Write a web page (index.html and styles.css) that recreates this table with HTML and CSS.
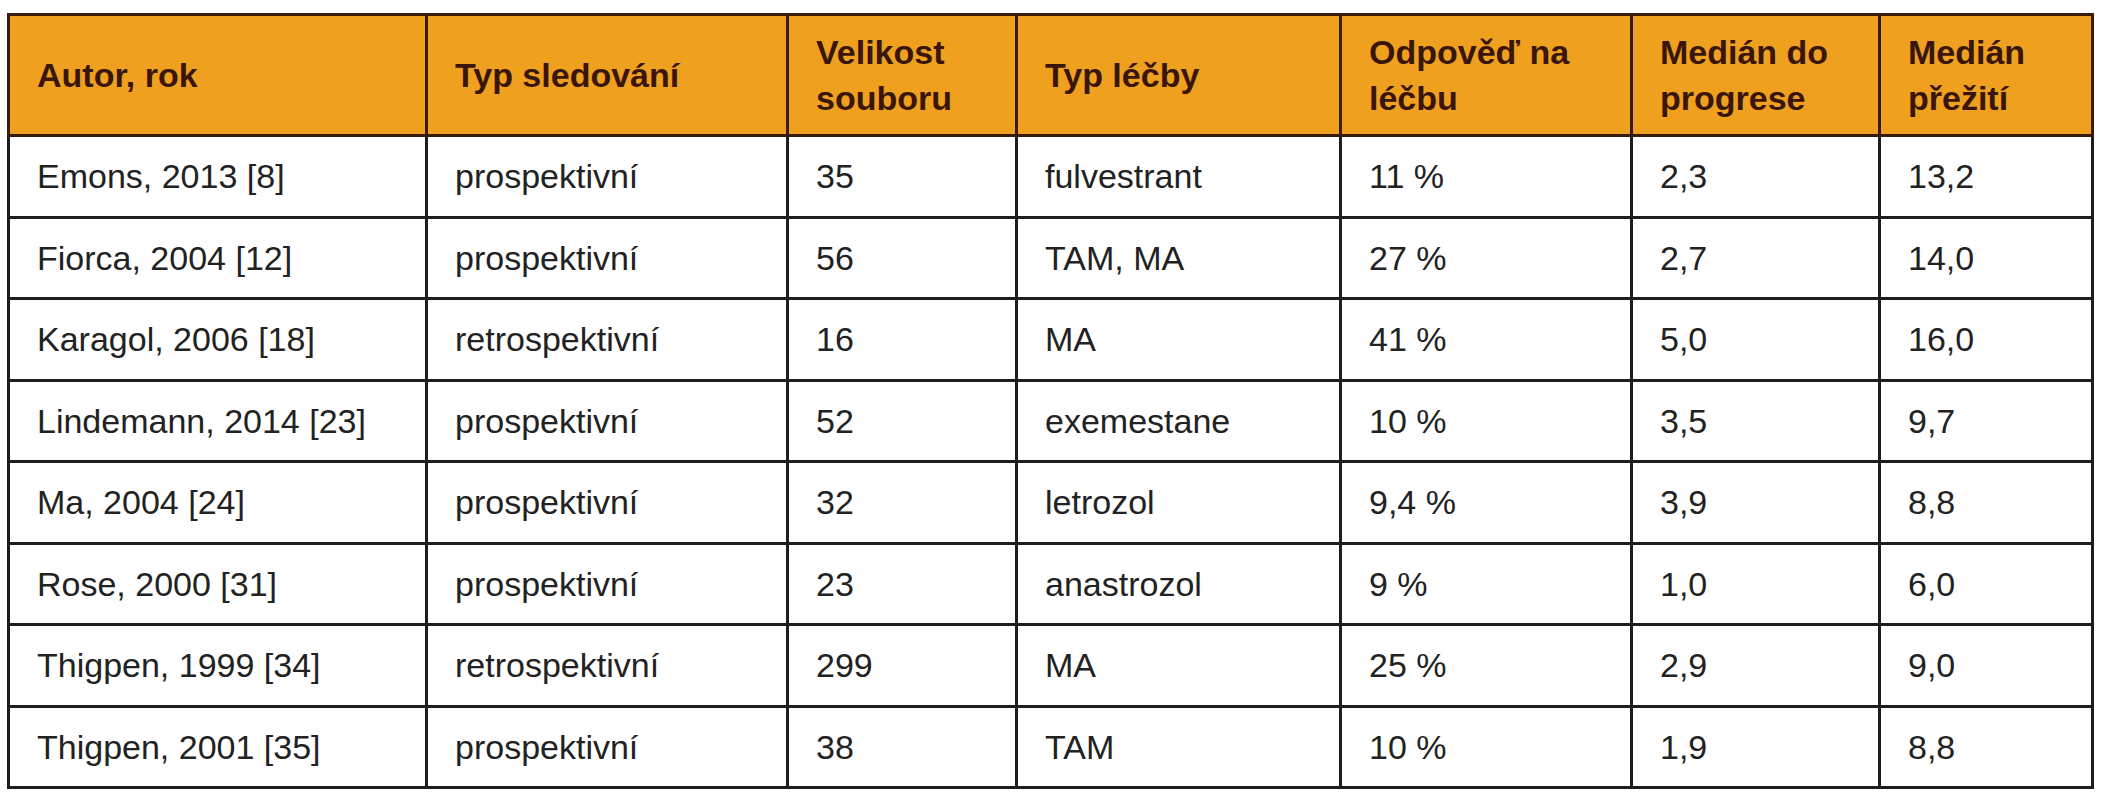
FILE: index.html
```html
<!DOCTYPE html>
<html lang="cs">
<head>
<meta charset="utf-8">
<title>Tabulka</title>
<link rel="stylesheet" href="styles.css">
</head>
<body>
<table class="data">
  <colgroup>
    <col class="c1"><col class="c2"><col class="c3"><col class="c4"><col class="c5"><col class="c6"><col class="c7">
  </colgroup>
  <thead>
    <tr>
      <th>Autor, rok</th>
      <th>Typ sledování</th>
      <th>Velikost<br>souboru</th>
      <th>Typ léčby</th>
      <th>Odpověď na<br>léčbu</th>
      <th>Medián do<br>progrese</th>
      <th>Medián<br>přežití</th>
    </tr>
  </thead>
  <tbody>
    <tr><td>Emons, 2013 [8]</td><td>prospektivní</td><td>35</td><td>fulvestrant</td><td>11 %</td><td>2,3</td><td>13,2</td></tr>
    <tr><td>Fiorca, 2004 [12]</td><td>prospektivní</td><td>56</td><td>TAM, MA</td><td>27 %</td><td>2,7</td><td>14,0</td></tr>
    <tr><td>Karagol, 2006 [18]</td><td>retrospektivní</td><td>16</td><td>MA</td><td>41 %</td><td>5,0</td><td>16,0</td></tr>
    <tr><td>Lindemann, 2014 [23]</td><td>prospektivní</td><td>52</td><td>exemestane</td><td>10 %</td><td>3,5</td><td>9,7</td></tr>
    <tr><td>Ma, 2004 [24]</td><td>prospektivní</td><td>32</td><td>letrozol</td><td>9,4 %</td><td>3,9</td><td>8,8</td></tr>
    <tr><td>Rose, 2000 [31]</td><td>prospektivní</td><td>23</td><td>anastrozol</td><td>9 %</td><td>1,0</td><td>6,0</td></tr>
    <tr><td>Thigpen, 1999 [34]</td><td>retrospektivní</td><td>299</td><td>MA</td><td>25 %</td><td>2,9</td><td>9,0</td></tr>
    <tr><td>Thigpen, 2001 [35]</td><td>prospektivní</td><td>38</td><td>TAM</td><td>10 %</td><td>1,9</td><td>8,8</td></tr>
  </tbody>
</table>
</body>
</html>
```
FILE: styles.css
```css
html, body {
  margin: 0;
  padding: 0;
  background: #ffffff;
}

body {
  padding: 13px 0 0 7px;
  font-family: "Liberation Sans", Arial, sans-serif;
}

.data {
  border-collapse: collapse;
  table-layout: fixed;
  width: 2084px;
}

.c1 { width: 418px; }
.c2 { width: 361px; }
.c3 { width: 229px; }
.c4 { width: 324px; }
.c5 { width: 291px; }
.c6 { width: 248px; }
.c7 { width: 213px; }

.data th,
.data td {
  text-align: left;
  vertical-align: middle;
  white-space: nowrap;
  padding: 0 0 0 27px;
}

.data th {
  background: #efa01f;
  color: #3a160a;
  font-weight: 700;
  font-size: 34px;
  line-height: 46px;
  height: 118px;
  border: 3px solid #3a1a0c;
}

.data td {
  color: #222222;
  font-weight: 400;
  font-size: 34px;
  line-height: 40px;
  height: 78.5px;
  border: 3px solid #1e1e1e;
}
```
